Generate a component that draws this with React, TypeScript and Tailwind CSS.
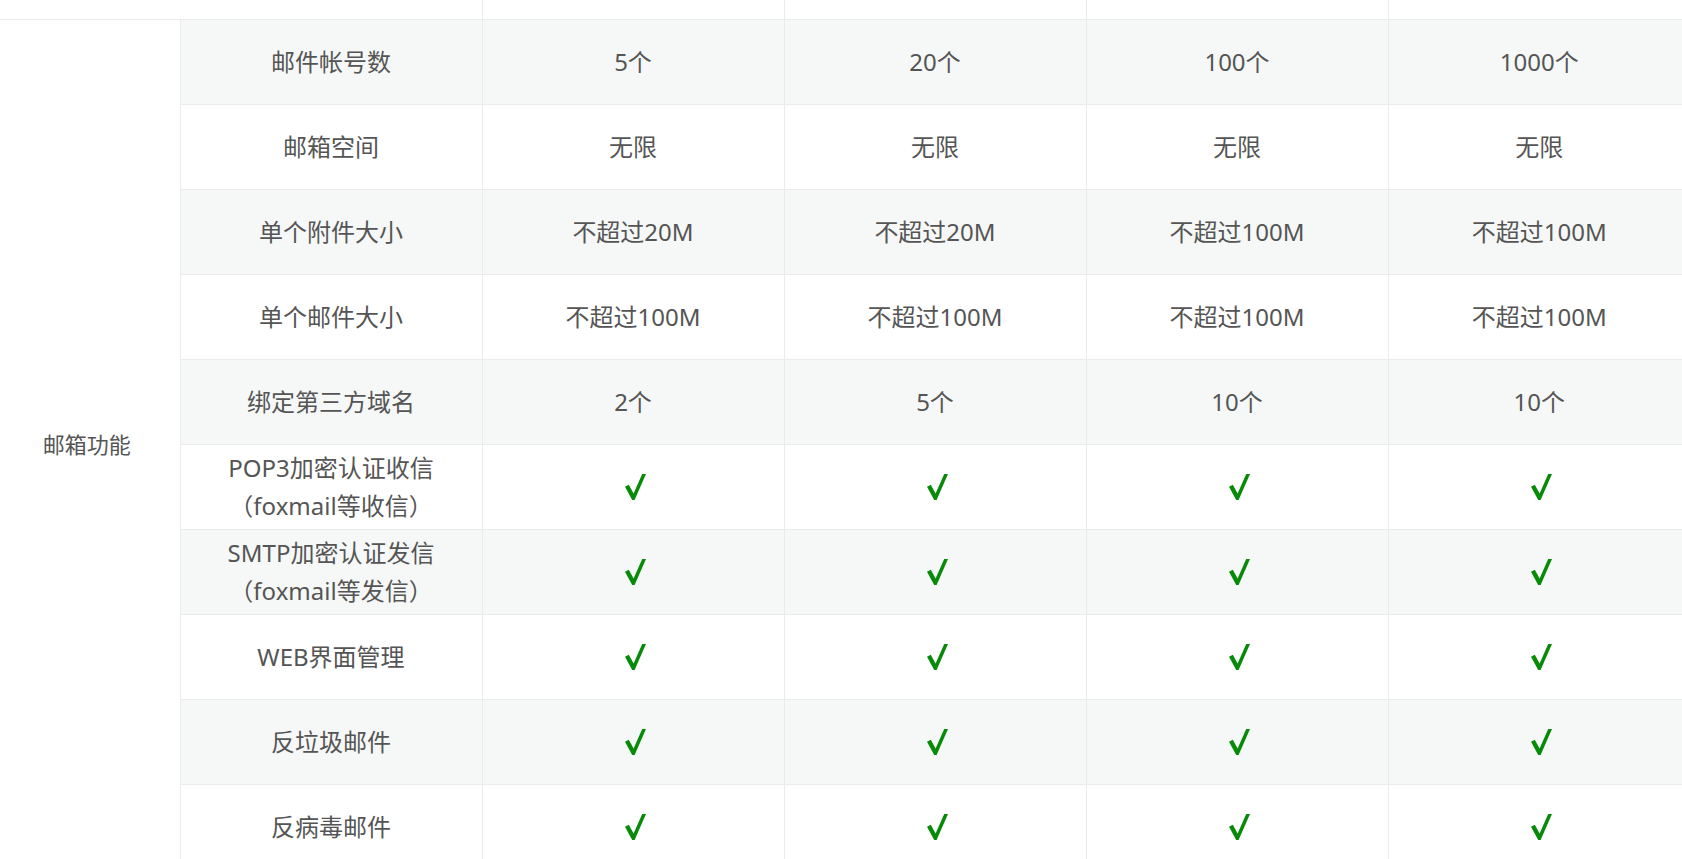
import React from "react";

const FONT = '"Noto Sans", "Noto Sans CJK SC", sans-serif';

type Row = { label: React.ReactNode; values: string[] | null };

const rows: Row[] = [
  { label: "邮件帐号数", values: ["5个", "20个", "100个", "1000个"] },
  { label: "邮箱空间", values: ["无限", "无限", "无限", "无限"] },
  { label: "单个附件大小", values: ["不超过20M", "不超过20M", "不超过100M", "不超过100M"] },
  { label: "单个邮件大小", values: ["不超过100M", "不超过100M", "不超过100M", "不超过100M"] },
  { label: "绑定第三方域名", values: ["2个", "5个", "10个", "10个"] },
  {
    label: (
      <>
        POP3加密认证收信
        <br />
        （foxmail等收信）
      </>
    ),
    values: null,
  },
  {
    label: (
      <>
        SMTP加密认证发信
        <br />
        （foxmail等发信）
      </>
    ),
    values: null,
  },
  { label: "WEB界面管理", values: null },
  { label: "反垃圾邮件", values: null },
  { label: "反病毒邮件", values: null },
];

function Check() {
  return (
    <svg
      width="21"
      height="26"
      viewBox="0 0 21 26"
      className="block mx-auto translate-x-[2px]"
      role="img"
      aria-label="√"
    >
      <path d="M0 12.8 L3.8 10.8 L8.6 19.6 L17.2 0 L21 0 L9.6 26 L7.2 26 Z" fill="#078a07" />
    </svg>
  );
}

export default function App() {
  return (
    <div
      className="w-[1682px] h-[859px] overflow-hidden bg-white text-[#555]"
      style={{ fontFamily: FONT }}
    >
      <table className="w-[1690px] table-fixed border-collapse text-[24px] leading-[38px] text-center">
        <colgroup>
          <col className="w-[180px]" />
          <col className="w-[302px]" />
          <col className="w-[302px]" />
          <col className="w-[302px]" />
          <col className="w-[302px]" />
          <col className="w-[302px]" />
        </colgroup>
        <tbody>
          <tr className="h-[19px]">
            <td colSpan={2} className="border-b border-r border-[#ebebeb] p-0"></td>
            <td className="border-b border-r border-[#ebebeb] p-0"></td>
            <td className="border-b border-r border-[#ebebeb] p-0"></td>
            <td className="border-b border-r border-[#ebebeb] p-0"></td>
            <td className="border-b border-[#ebebeb] p-0"></td>
          </tr>
          {rows.map((r, i) => (
            <tr key={i} className={`h-[85px] ${i % 2 === 0 ? "bg-[#f5f8f7]" : "bg-white"}`}>
              {i === 0 && (
                <td
                  rowSpan={10}
                  className="bg-white border-r border-b border-[#ebebeb] text-[22px] align-middle p-0 pr-[6px]"
                >
                  邮箱功能
                </td>
              )}
              <td className="border border-[#ebebeb] align-middle p-0">{r.label}</td>
              {[0, 1, 2, 3].map((k) => (
                <td
                  key={k}
                  className={`border-b border-t border-[#ebebeb] align-middle p-0 ${k < 3 ? "border-r" : ""}`}
                >
                  {r.values ? r.values[k] : <Check />}
                </td>
              ))}
            </tr>
          ))}
        </tbody>
      </table>
    </div>
  );
}
